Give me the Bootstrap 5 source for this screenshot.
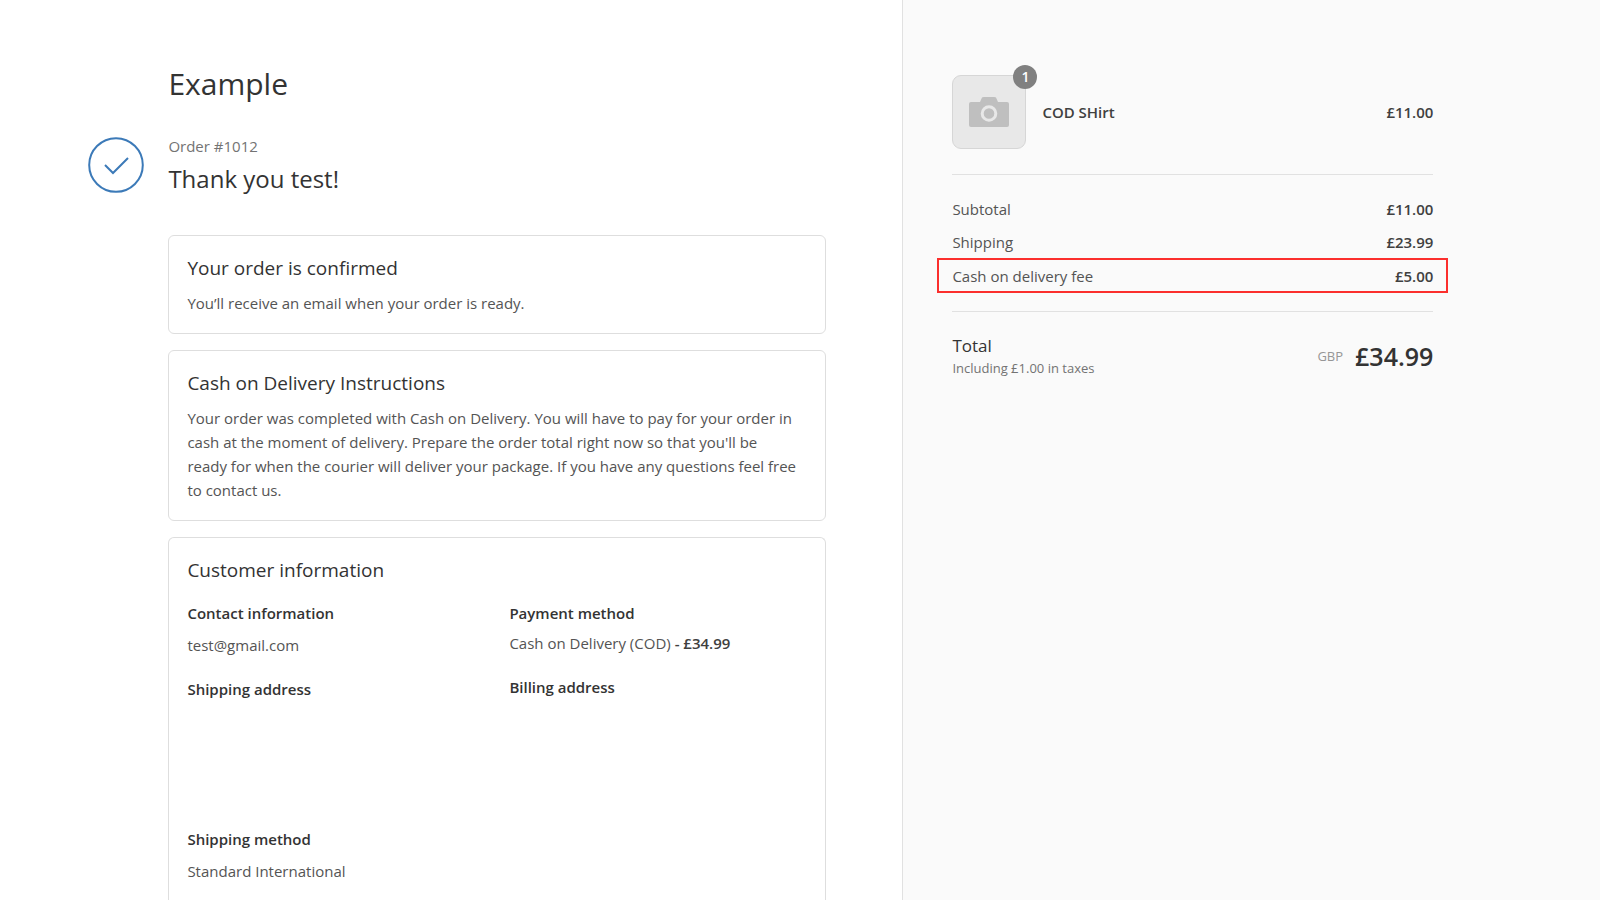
<!DOCTYPE html>
<html lang="en">
<head>
<meta charset="utf-8">
<meta name="viewport" content="width=device-width, initial-scale=1">
<title>Thank you test! – Example</title>
<link href="https://cdn.jsdelivr.net/npm/bootstrap@5.3.0/dist/css/bootstrap.min.css" rel="stylesheet">
<style>
  body { font-family: "Open Sans", "Noto Sans", sans-serif; font-size: 15px; line-height: 24px; color: #545454; background: #fff; }
  h1, h2, h3, h4, p { margin: 0; font-weight: 400; color: #333; }
  p { color: #545454; }
  .page { min-height: 100vh; }
  .order-main { flex: 0 0 56.4%; padding: 62px 76px 0 24px; }
  .order-inner { max-width: 738px; padding-left: 80px; }
  .shop-name { font-size: 30px; line-height: 44px; }
  .order-head { margin: 26px 0 37px -80px; gap: 24px; }
  .order-no { font-size: 15px; line-height: 28px; color: #737373; }
  .thanks { font-size: 24px; line-height: 38px; }
  .panel { border: 1px solid #dedede; border-radius: 6px; padding: 18px; margin-bottom: 16px; }
  .panel h3 { font-size: 19px; line-height: 29px; margin-bottom: 8px; }
  .panel-last { border-bottom: 0; border-bottom-left-radius: 0; border-bottom-right-radius: 0; margin-bottom: 0; flex: 1; }
  .info h4 { font-size: 15px; line-height: 24px; font-weight: 600; }
  .info-group { display: grid; row-gap: 8px; margin-bottom: 20px; }
  .info-group.tight { row-gap: 6px; }
  .address-room { min-height: 130px; align-content: start; }
  .order-side { background: #fafafa; border-left: 1px solid #e1e1e1; padding: 75px 24px 0 49px; }
  .side-inner { max-width: 481px; }
  .thumb { width: 74px; height: 74px; background: #e8e8e8; border: 1px solid #d6d6d6; border-radius: 9px; }
  .qty { top: -11px; right: -12px; width: 24px; height: 24px; border-radius: 50%; background: #808080; color: #fff; font-size: 14px; font-weight: 600; }
  .product { padding-bottom: 25px; border-bottom: 1px solid #e1e1e1; }
  .medium { font-weight: 600; color: #404040; }
  .sums { padding: 17px 0 18px; border-bottom: 1px solid #e1e1e1; }
  .sum-line { min-height: 33px; }
  .sum-marked { margin: 0 -15px; padding: 0 13px; min-height: 35px; border: 2px solid #fb2f2d; }
  .total-row { padding-top: 22px; }
  .total-name { font-size: 17px; line-height: 24px; color: #333; }
  .tax-note { font-size: 13px; line-height: 20px; color: #737373; }
  .currency { font-size: 13px; color: #969696; }
  .grand { font-size: 25px; line-height: 36px; color: #333; }
</style>
</head>
<body>
<div class="page d-flex">
  <main class="order-main d-flex justify-content-end">
    <div class="order-inner w-100 d-flex flex-column">
      <h1 class="shop-name">Example</h1>
      <div class="order-head d-flex align-items-center">
        <svg width="56" height="56" viewBox="0 0 56 56" fill="none" stroke="#3c7ab8" stroke-width="2" aria-hidden="true"><circle cx="28" cy="28" r="26.8"/><path d="M17 28l8 8 15-15"/></svg>
        <div>
          <p class="order-no">Order #1012</p>
          <h2 class="thanks">Thank you test!</h2>
        </div>
      </div>
      <section class="panel">
        <h3>Your order is confirmed</h3>
        <p>You’ll receive an email when your order is ready.</p>
      </section>
      <section class="panel">
        <h3>Cash on Delivery Instructions</h3>
        <p>Your order was completed with Cash on Delivery. You will have to pay for your order in cash at the moment of delivery. Prepare the order total right now so that you'll be<br> ready for when the courier will deliver your package. If you have any questions feel free to contact us.</p>
      </section>
      <section class="panel panel-last">
        <h3>Customer information</h3>
        <div class="row info gx-4 pt-2">
          <div class="col-6">
            <div class="info-group"><h4>Contact information</h4><p>test@gmail.com</p></div>
            <div class="info-group address-room"><h4>Shipping address</h4></div>
            <div class="info-group"><h4>Shipping method</h4><p>Standard International</p></div>
          </div>
          <div class="col-6">
            <div class="info-group tight"><h4>Payment method</h4><p>Cash on Delivery (COD) <span class="medium">- £34.99</span></p></div>
            <div class="info-group"><h4>Billing address</h4></div>
          </div>
        </div>
      </section>
    </div>
  </main>
  <aside class="order-side flex-grow-1">
    <div class="side-inner">
      <div class="product d-flex align-items-center gap-3">
        <div class="thumb position-relative d-flex align-items-center justify-content-center">
          <svg width="40" height="32" viewBox="0 0 40 32" aria-hidden="true"><path fill="#bfbfbf" d="M2 6h9l2-4.500Q13.500 1 15 1h10q1.500 0 2 .5L29 6h9q2 0 2 2v21q0 2-2 2H2q-2 0-2-2V8q0-2 2-2z"/><circle cx="20" cy="17.500" r="6.800" fill="#bfbfbf" stroke="#e8e8e8" stroke-width="3"/></svg>
          <span class="qty position-absolute d-flex align-items-center justify-content-center">1</span>
        </div>
        <span class="medium flex-grow-1">COD SHirt</span>
        <span class="medium">£11.00</span>
      </div>
      <div class="sums">
        <div class="sum-line d-flex align-items-center justify-content-between"><span>Subtotal</span><span class="medium">£11.00</span></div>
        <div class="sum-line d-flex align-items-center justify-content-between"><span>Shipping</span><span class="medium">£23.99</span></div>
        <div class="sum-marked d-flex align-items-center justify-content-between"><span>Cash on delivery fee</span><span class="medium">£5.00</span></div>
      </div>
      <div class="total-row d-flex align-items-center justify-content-between">
        <div><div class="total-name">Total</div><div class="tax-note">Including £1.00 in taxes</div></div>
        <div class="d-flex align-items-center gap-2"><span class="currency me-1">GBP</span><span class="grand medium">£34.99</span></div>
      </div>
    </div>
  </aside>
</div>
<script src="https://cdn.jsdelivr.net/npm/bootstrap@5.3.0/dist/js/bootstrap.bundle.min.js"></script>
</body>
</html>
